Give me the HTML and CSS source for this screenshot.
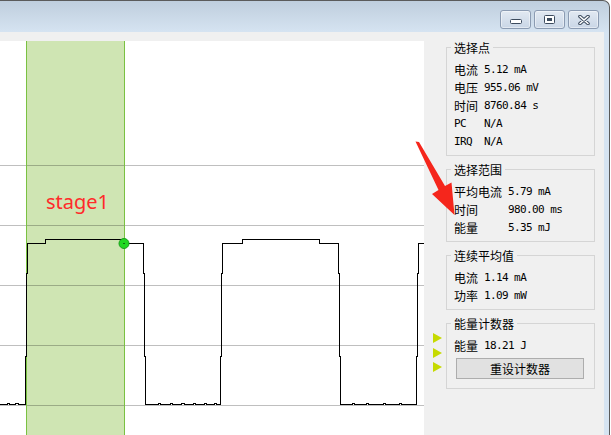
FILE: index.html
```html
<!DOCTYPE html>
<html>
<head>
<meta charset="utf-8">
<link rel="stylesheet" href="styles.css">
</head>
<body>
<div class="window">
  <div class="titlebar">
    <div class="tb-btn tb-min"><svg width="12" height="5" viewBox="0 0 12 5"><rect x="0.5" y="0.5" width="11" height="4" rx="1" fill="#fff" stroke="#3c4b5e"/></svg></div>
    <div class="tb-btn"><svg width="11" height="9" viewBox="0 0 11 9"><rect x="0.5" y="0.5" width="10" height="8" rx="1" fill="#fff" stroke="#3c4b5e"/><rect x="3" y="3" width="5" height="3" fill="#3c4b5e"/></svg></div>
    <div class="tb-btn"><svg width="12" height="10" viewBox="0 0 12 10"><path d="M2 1.5 L10 8.5 M10 1.5 L2 8.5" stroke="#3c4b5e" stroke-width="3.6" stroke-linecap="round"/><path d="M2 1.5 L10 8.5 M10 1.5 L2 8.5" stroke="#fff" stroke-width="1.6" stroke-linecap="round"/></svg></div>
  </div>
  <div class="client">
    <div class="chart">
      <svg width="424" height="394" viewBox="0 0 424 394">
        <rect x="26" y="0" width="99" height="394" fill="#cfe5b3"/>
        <g stroke="#000" stroke-opacity="0.25" shape-rendering="crispEdges">
          <line x1="0" y1="124.5" x2="424" y2="124.5"/>
          <line x1="0" y1="184.5" x2="424" y2="184.5"/>
          <line x1="0" y1="244.5" x2="424" y2="244.5"/>
          <line x1="0" y1="304.5" x2="424" y2="304.5"/>
          <line x1="0" y1="364.5" x2="424" y2="364.5"/>
        </g>
        <g stroke="#7ac142" shape-rendering="crispEdges">
          <line x1="26.5" y1="0" x2="26.5" y2="394"/>
          <line x1="124.5" y1="0" x2="124.5" y2="394"/>
        </g>
        <text x="46" y="168" class="stage">stage1</text>
        <path fill="none" stroke="#000" shape-rendering="crispEdges" d="M0 363.5 H7 V362.5 H9 V363.5 H15 V362.5 H18 V363.5 H25.5 V315 H26.5 V232 H27.5 V202.5 H45.5 V198.5 H122.5 V202.5 H143.5 V232 H144.5 V315 H145.5 V363.5 H158 V362.5 H160 V363.5 H170 V362.5 H172 V363.5 H181 V362.5 H184 V363.5 H193 V362.5 H195 V363.5 H204 V362.5 H206 V363.5 H214 V362.5 H216 V363.5 H220.5 V315 H221.5 V232 H222.5 V202.5 H242.5 V198.5 H319.5 V202.5 H338.5 V232 H339.5 V315 H340.5 V363.5 H352 V362.5 H354 V363.5 H366 V362.5 H368 V363.5 H383 V362.5 H385 V363.5 H399 V362.5 H401 V363.5 H416.5 V315 H417.5 V232 H418.5 V202.5 H424"/>
        <circle cx="124" cy="202.5" r="5" fill="#22d822" stroke="#1b9e1b" stroke-width="1"/>
        <rect x="123.5" y="202" width="1" height="1" fill="#000"/>
      </svg>
    </div>
    <div class="panel">
      <div class="group">
        <div class="group-title">选择点</div>
        <div class="row"><span class="lbl">电流</span><span class="mono">5.12 mA</span></div>
        <div class="row"><span class="lbl">电压</span><span class="mono">955.06 mV</span></div>
        <div class="row"><span class="lbl">时间</span><span class="mono">8760.84 s</span></div>
        <div class="row"><span class="lbl mono">PC</span><span class="mono">N/A</span></div>
        <div class="row"><span class="lbl mono">IRQ</span><span class="mono">N/A</span></div>
      </div>
      <div class="group">
        <div class="group-title">选择范围</div>
        <div class="row"><span class="lbl wide">平均电流</span><span class="mono">5.79 mA</span></div>
        <div class="row"><span class="lbl wide">时间</span><span class="mono">980.00 ms</span></div>
        <div class="row"><span class="lbl wide">能量</span><span class="mono">5.35 mJ</span></div>
      </div>
      <div class="group">
        <div class="group-title">连续平均值</div>
        <div class="row"><span class="lbl">电流</span><span class="mono">1.14 mA</span></div>
        <div class="row"><span class="lbl">功率</span><span class="mono">1.09 mW</span></div>
      </div>
      <div class="g4wrap">
        <div class="marks"><i></i><i></i><i></i></div>
        <div class="group">
          <div class="group-title">能量计数器</div>
          <div class="row"><span class="lbl">能量</span><span class="mono">18.21 J</span></div>
          <div class="reset">重设计数器</div>
        </div>
      </div>
    </div>
  </div>
</div>
<svg class="arrow" width="50" height="80" viewBox="410 138 50 80">
  <polygon points="415.5,141.5 419,142 445,186 451.5,182.5 454.5,215 432,194 438.5,190" fill="#f5261c"/>
</svg>
</body>
</html>
```

FILE: styles.css
```css
* { box-sizing: border-box; margin: 0; padding: 0; }
html, body { background: #fff; }
body {
  width: 611px;
  height: 435px;
  overflow: hidden;
  font-family: "Noto Sans CJK SC", "Noto Sans", sans-serif;
  font-size: 12px;
  color: #000;
}
.window {
  width: 610px;
  height: 435px;
  border-top: 1px solid #5b5b5b;
  border-right: 1px solid #5b5b5b;
  border-top-right-radius: 7px;
  background: linear-gradient(#bfcedd, #d6e4f2 32px, #d6e4f2);
  overflow: hidden;
}
.titlebar {
  height: 31px;
  display: flex;
  justify-content: flex-end;
  align-items: flex-start;
  gap: 3px;
  padding: 9px 10px 0 0;
}
.tb-btn {
  width: 31px;
  height: 19px;
  border: 1px solid #8b9bb2;
  border-radius: 3px;
  background: linear-gradient(#e2e9f2, #c9d6e6);
  box-shadow: inset 0 0 0 1px rgba(255, 255, 255, 0.45);
  display: flex;
  align-items: center;
  justify-content: center;
}
.tb-btn svg { display: block; }
.tb-min { align-items: flex-end; padding-bottom: 4px; }
.client {
  margin-right: 5px;
  height: 403px;
  background: #f0f0f0;
  padding-top: 9px;
  display: flex;
  align-items: flex-start;
}
.chart {
  width: 424px;
  height: 394px;
  flex: none;
  background: #fff;
}
.chart svg { display: block; }
.stage {
  font-family: "Noto Sans", sans-serif;
  font-size: 20px;
  fill: #ff2a2a;
}
.panel {
  width: 180px;
  flex: none;
  padding-top: 6px;
}
.group {
  width: 149px;
  margin-left: 22px;
  margin-bottom: 13px;
  border: 1px solid #d5d5d5;
  padding: 0 6px 4px 7px;
}
.group-title {
  display: table;
  margin: -8px 0 5px -3px;
  padding: 0 3px;
  background: #f0f0f0;
  line-height: 16px;
}
.row {
  display: flex;
  height: 18px;
  line-height: 18px;
  white-space: pre;
}
.lbl { width: 30px; flex: none; }
.lbl.wide { width: 54px; }
.mono {
  font-family: "DejaVu Sans Mono", monospace;
  font-size: 11px;
  letter-spacing: -0.6px;
}
.reset {
  width: 128px;
  height: 21px;
  margin: 3px 0 5px 2px;
  border: 1px solid #adadad;
  background: #e1e1e1;
  line-height: 19px;
  text-align: center;
}
.g4wrap { display: flex; }
.g4wrap .group { margin-left: 0; }
.marks {
  width: 22px;
  flex: none;
  padding: 10px 0 0 9px;
  display: flex;
  flex-direction: column;
  gap: 4.5px;
}
.marks i {
  display: block;
  width: 0;
  height: 0;
  border-left: 9px solid #c6da00;
  border-top: 5px solid transparent;
  border-bottom: 5px solid transparent;
}
.arrow {
  position: absolute;
  left: 410px;
  top: 138px;
}
```
